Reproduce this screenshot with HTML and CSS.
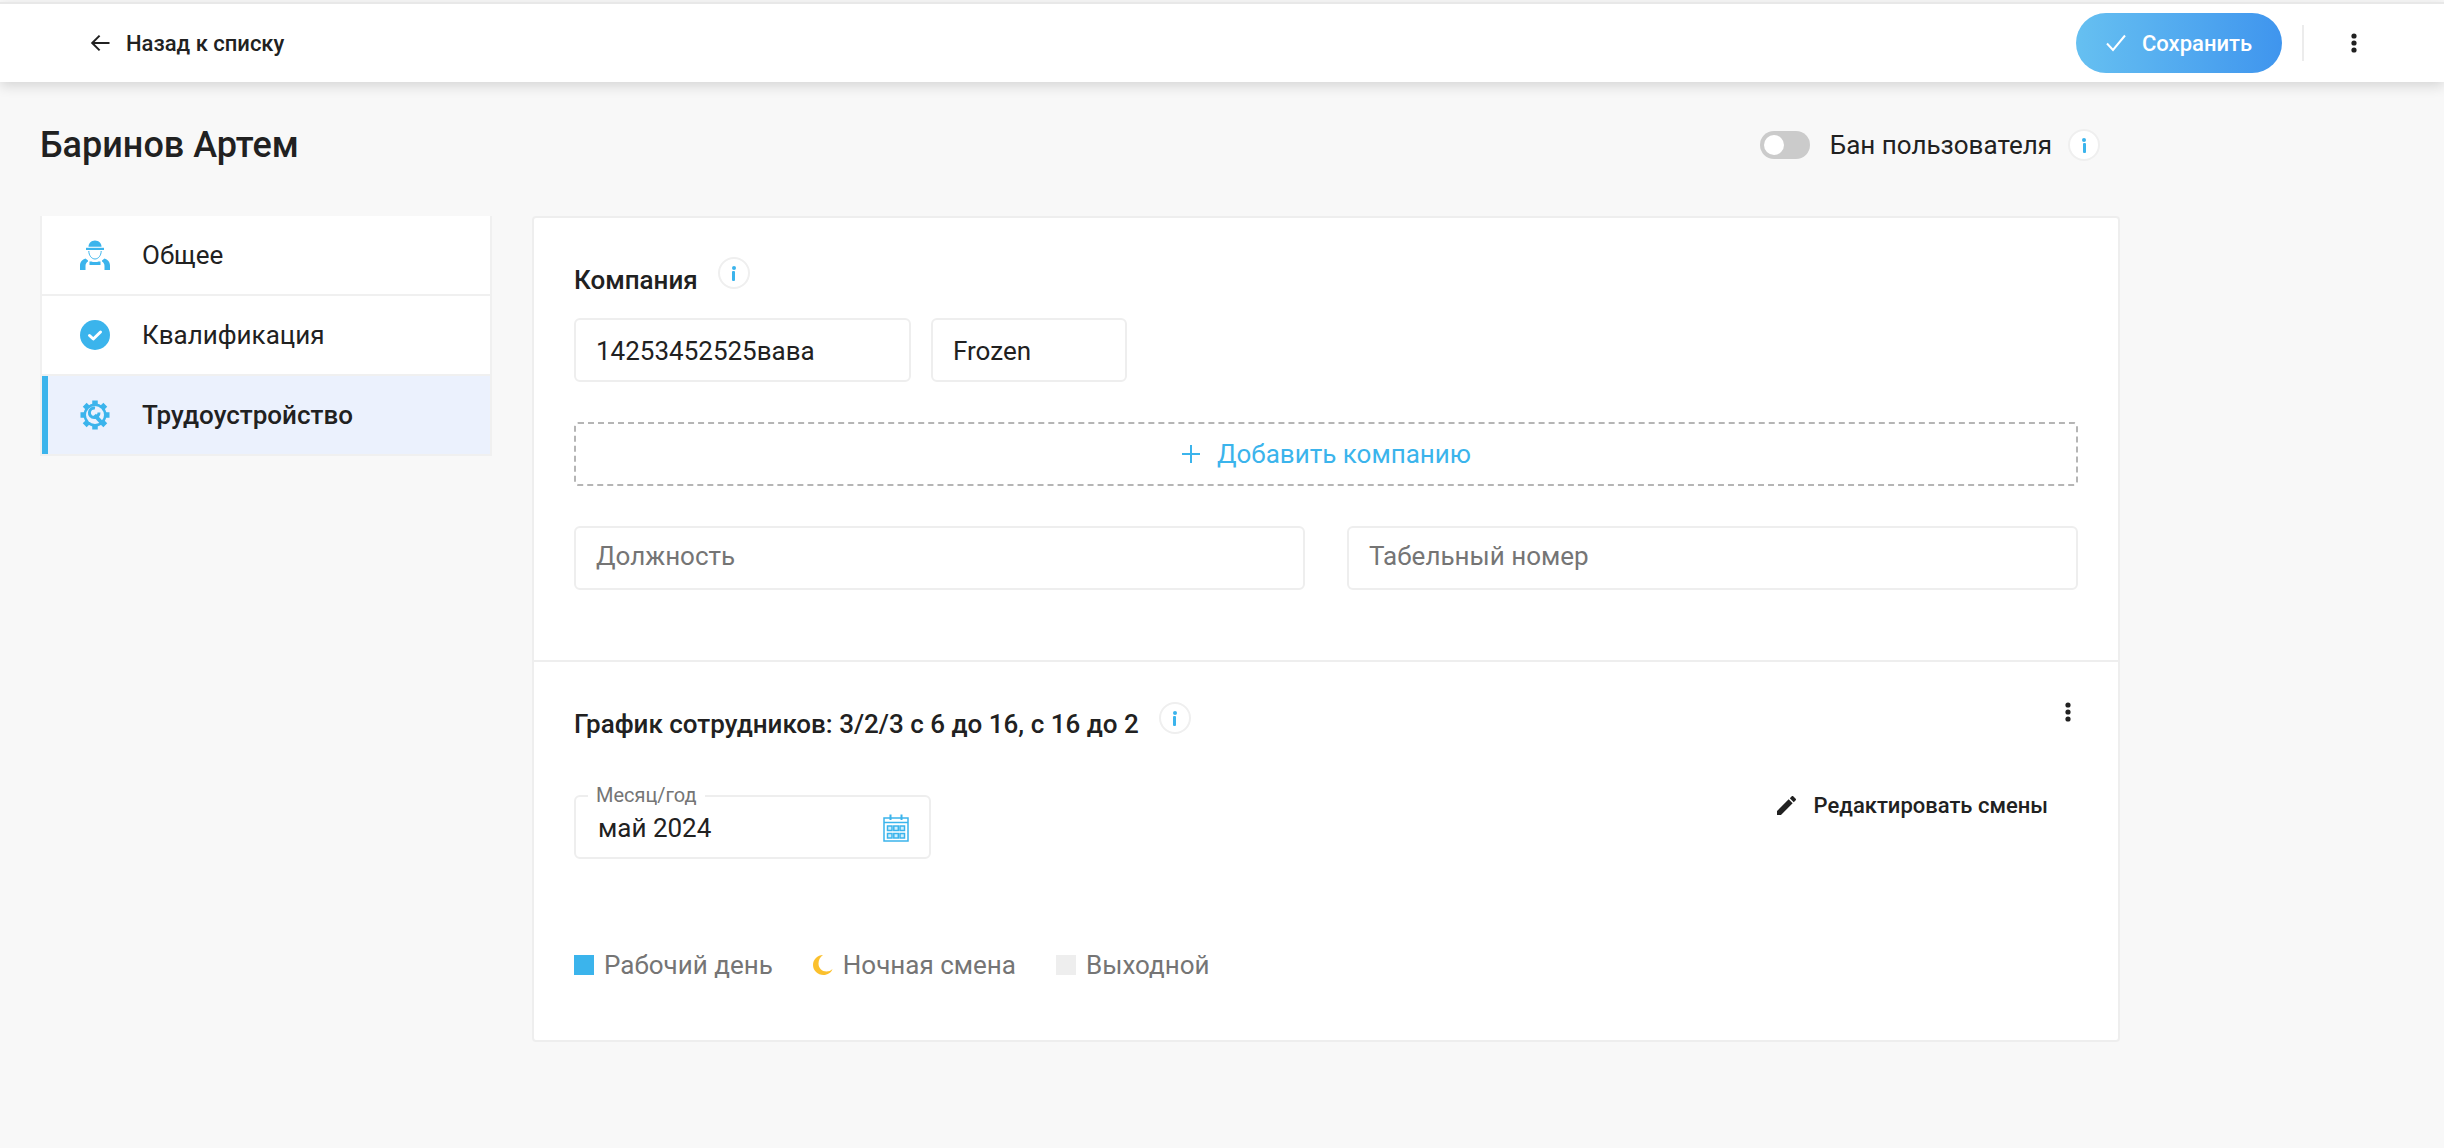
FILE: index.html
```html
<!DOCTYPE html>
<html lang="ru">

<head>
    <meta charset="UTF-8">
    <title>Баринов Артем</title>
    <link rel="stylesheet" href="styles.css">
</head>

<body>
    <header class="topbar">
        <a class="back-link" href="#">
            <svg class="back-icon" viewBox="0 0 20 20"><path d="M19.5 10H2.5M9.6 2.6 2.2 10l7.4 7.4" fill="none" stroke="#212121" stroke-width="2"/></svg>
            <span>Назад к списку</span>
        </a>
        <div class="topbar-actions">
            <button class="save-btn" type="button">
                <svg class="save-icon" viewBox="0 0 20 18"><path d="M1 9.5 7 16 19 1.5" fill="none" stroke="#fff" stroke-width="2"/></svg>
                <span>Сохранить</span>
            </button>
            <div class="topbar-divider"></div>
            <svg class="dots dots-top" viewBox="0 0 6 20"><circle cx="3" cy="3" r="2.6"/><circle cx="3" cy="10" r="2.6"/><circle cx="3" cy="17" r="2.6"/></svg>
        </div>
    </header>

    <main class="content">
        <div class="title-row">
            <h1>Баринов Артем</h1>
            <div class="ban">
                <span class="toggle"><span class="toggle-knob"></span></span>
                <span class="ban-label">Бан пользователя</span>
                <span class="info"><span class="info-dot"></span><span class="info-stem"></span></span>
            </div>
        </div>

        <div class="columns">
            <nav class="sidebar">
                <a class="side-item" href="#">
                    <svg class="side-icon" viewBox="0 0 30 30">
                        <path fill="#3bb4ec" d="M8.500 6.800C8.500 3.300 11.300 0.500 15 0.500s6.500 2.800 6.500 6.300Z"/>
                        <rect x="6" y="7.800" width="18" height="2.200" fill="#3bb4ec"/>
                        <path fill="none" stroke="#3bb4ec" stroke-width="1" d="M8.800 11c0 4.500 2.900 8 6.200 8s6.200-3.500 6.200-8"/>
                        <path fill="#3bb4ec" d="M0 30v-4.500c0-3.500 2.300-6 5.500-7l2.500 2v1c-1.700 1-2.500 2.500-2.500 4.500v4Z"/>
                        <path fill="#3bb4ec" d="M30 30v-4.500c0-3.500-2.300-6-5.500-7l-2.500 2v1c1.700 1 2.500 2.500 2.500 4.500v4Z"/>
                        <path fill="#3bb4ec" d="M9.500 21.500h2c1.200.8 5.800.8 7 0h2V25h-11Z"/>
                    </svg>
                    <span>Общее</span>
                </a>
                <a class="side-item" href="#">
                    <svg class="side-icon" viewBox="0 0 30 30">
                        <circle cx="15" cy="15" r="15" fill="#3bb4ec"/>
                        <path d="M9.500 15.500l3.800 3.500 7.200-7" fill="none" stroke="#fff" stroke-width="3" stroke-linecap="round" stroke-linejoin="round"/>
                    </svg>
                    <span>Квалификация</span>
                </a>
                <a class="side-item side-item-active" href="#">
                    <svg class="side-icon" viewBox="0 0 30 30">
                        <path stroke="#3bb4ec" stroke-width="5.500" d="M15 0.500V29.500M0.500 15H29.500M4.700 4.700 25.300 25.300M25.300 4.700 4.700 25.300"/>
                        <circle cx="15" cy="15" r="11.500" fill="#3bb4ec"/>
                        <circle cx="15" cy="15" r="9" fill="#ebf1fd"/>
                        <path d="M16.500 8.500A4.800 4.800 0 1 0 20.500 13" fill="none" stroke="#3bb4ec" stroke-width="3" transform="translate(-1.500 -.5)"/>
                        <path d="M14.500 15 22 23" stroke="#3bb4ec" stroke-width="4"/>
                    </svg>
                    <span>Трудоустройство</span>
                </a>
            </nav>

            <section class="card">
                <div class="card-block company-block">
                    <div class="block-title">
                        <h2>Компания</h2>
                        <span class="info"><span class="info-dot"></span><span class="info-stem"></span></span>
                    </div>
                    <div class="chips">
                        <div class="field chip chip-name">14253452525вава</div>
                        <div class="field chip chip-status">Frozen</div>
                    </div>
                    <button class="add-company" type="button">
                        <svg class="plus" viewBox="0 0 20 20"><path d="M10 1V19M1 10H19" stroke="#3bb4ec" stroke-width="2"/></svg>
                        <span>Добавить компанию</span>
                    </button>
                    <div class="field-row">
                        <div class="field placeholder">Должность</div>
                        <div class="field placeholder">Табельный номер</div>
                    </div>
                </div>

                <div class="card-block schedule-block">
                    <div class="schedule-head">
                        <div class="block-title">
                            <h2 class="schedule-title">График сотрудников: 3/2/3 с 6 до 16, с 16 до 2</h2>
                            <span class="info"><span class="info-dot"></span><span class="info-stem"></span></span>
                        </div>
                        <svg class="dots dots-card" viewBox="0 0 6 20"><circle cx="3" cy="3" r="2.600"/><circle cx="3" cy="10" r="2.600"/><circle cx="3" cy="17" r="2.600"/></svg>
                    </div>
                    <div class="schedule-controls">
                        <div class="field month-field">
                            <span class="month-label">Месяц/год</span>
                            <span class="month-value">май 2024</span>
                            <svg class="calendar" viewBox="0 0 26 28">
                                <path d="M1 4H25V27H1Z" fill="none" stroke="#3bb4ec" stroke-width="1.500"/>
                                <path d="M1 8.500H25" stroke="#3bb4ec" stroke-width="1.500"/>
                                <path d="M7.500 0.500V6M18.500 0.500V6" stroke="#3bb4ec" stroke-width="2"/>
                                <g fill="#cfeefc" stroke="#3bb4ec" stroke-width="1.500">
                                    <rect x="4.500" y="12" width="4.500" height="4.500"/><rect x="10.800" y="12" width="4.500" height="4.500"/><rect x="17" y="12" width="4.500" height="4.500"/>
                                    <rect x="4.500" y="19.500" width="4.500" height="4.500"/><rect x="10.800" y="19.500" width="4.500" height="4.500"/><rect x="17" y="19.500" width="4.500" height="4.500"/>
                                </g>
                            </svg>
                        </div>
                        <a class="edit-link" href="#">
                            <svg class="pencil" viewBox="3 3 18 18"><path fill="#212121" d="M3 17.250V21h3.750L17.810 9.940l-3.750-3.750L3 17.250zM20.710 7.040a1 1 0 0 0 0-1.410l-2.340-2.340a1 1 0 0 0-1.410 0l-1.830 1.830 3.750 3.750 1.830-1.830z"/></svg>
                            <span>Редактировать смены</span>
                        </a>
                    </div>
                    <div class="legend">
                        <div class="legend-item"><span class="swatch swatch-work"></span><span>Рабочий день</span></div>
                        <div class="legend-item">
                            <svg class="moon" viewBox="0 0 20 20"><path fill="#fbc02d" d="M10 0C7 2 5.500 5 5.500 8.500c0 4.500 3.500 8 8 8 2.300 0 4.500-.8 6-2.500C18.500 17.500 14.500 20 10.500 20 4.700 20 0 15.500 0 10 0 4.500 4.500 0 10 0Z"/></svg>
                            <span>Ночная смена</span>
                        </div>
                        <div class="legend-item"><span class="swatch swatch-off"></span><span>Выходной</span></div>
                    </div>
                </div>
            </section>
        </div>
    </main>
</body>

</html>
```

FILE: styles.css
```css
* {
    box-sizing: border-box;
}

body {
    margin: 0;
    min-height: 100vh;
    background-color: #f8f8f8;
    font-family: 'Roboto', 'Liberation Sans', sans-serif;
    color: #212121;
    overflow: hidden;
}

a {
    color: inherit;
    text-decoration: none;
}

h1,
h2 {
    margin: 0;
    font-weight: 500;
}

.topbar {
    height: 80px;
    margin-top: 2px;
    border-top: 2px solid #e8e8e8;
    padding: 9px 0 0 90px;
    background: white;
    box-shadow: 0 4px 12px rgba(0, 0, 0, 0.14);
    display: flex;
    justify-content: space-between;
    align-items: flex-start;
}

.back-link {
    display: flex;
    align-items: center;
    gap: 16px;
    height: 60px;
    font-size: 22px;
    font-weight: 500;
}

.back-icon {
    width: 20px;
    height: 20px;
}

.topbar-actions {
    display: flex;
    align-items: center;
    height: 60px;
    padding-right: 87px;
}

.save-btn {
    width: 206px;
    height: 60px;
    padding: 0 0 0 30px;
    border: none;
    border-radius: 30px;
    background: linear-gradient(90deg, #66c0f1, #3f95ee);
    color: white;
    font-family: inherit;
    font-size: 22px;
    font-weight: 500;
    display: flex;
    align-items: center;
    gap: 16px;
}

.save-icon {
    width: 20px;
    height: 18px;
}

.topbar-divider {
    width: 2px;
    height: 36px;
    margin-left: 20px;
    background: #ececec;
}

.dots {
    width: 6px;
    height: 20px;
    fill: #212121;
    flex-shrink: 0;
}

.dots-top {
    margin-left: 47px;
}

.content {
    padding: 0 0 0 40px;
}

.title-row {
    width: 2060px;
    height: 134px;
    padding-bottom: 8px;
    display: flex;
    justify-content: space-between;
    align-items: center;
}

h1 {
    font-size: 36px;
}

.ban {
    display: flex;
    align-items: center;
}

.toggle {
    width: 50px;
    height: 28px;
    padding: 4px;
    border-radius: 14px;
    background: #cbcbcb;
    margin-right: 20px;
}

.toggle-knob {
    display: block;
    width: 20px;
    height: 20px;
    border-radius: 50%;
    background: white;
}

.ban-label {
    font-size: 26px;
    margin-right: 16px;
}

.info {
    width: 32px;
    height: 32px;
    border: 2px solid #efefef;
    border-radius: 50%;
    background: white;
    display: inline-flex;
    flex-direction: column;
    align-items: center;
    justify-content: center;
    gap: 1px;
    flex-shrink: 0;
}

.info-dot {
    width: 4px;
    height: 4px;
    border-radius: 50%;
    background: #3bb4ec;
}

.info-stem {
    width: 3px;
    height: 10px;
    border-radius: 1px;
    background: #3bb4ec;
}

.columns {
    display: flex;
    align-items: flex-start;
    gap: 41px;
}

.sidebar {
    width: 452px;
    border: 2px solid #f0f0f0;
    border-top: none;
    display: flex;
    flex-direction: column;
    background: #f0f0f0;
    gap: 2px;
}

.side-item {
    height: 78px;
    padding-left: 38px;
    background: white;
    display: flex;
    align-items: center;
    gap: 32px;
    font-size: 26px;
}

.side-item-active {
    padding-left: 32px;
    border-left: 6px solid #3bb4ec;
    background: #ebf1fd;
    font-weight: 500;
}

.side-icon {
    width: 30px;
    height: 30px;
    flex-shrink: 0;
}

.card {
    width: 1588px;
    height: 826px;
    margin-left: -1px;
    border: 2px solid #eeeeee;
    border-radius: 4px;
    background: white;
}

.card-block {
    padding: 0 40px;
}

.company-block {
    height: 444px;
    padding-top: 39px;
    border-bottom: 2px solid #eeeeee;
}

.block-title {
    display: flex;
    align-items: flex-start;
}

h2 {
    font-size: 26px;
    line-height: 32px;
    margin-top: 7px;
}

.schedule-title {
    margin-top: 6px;
}

.block-title .info {
    margin-left: 20px;
}

.chips {
    display: flex;
    gap: 20px;
    margin-top: 22px;
}

.field {
    height: 64px;
    padding: 0 20px;
    border: 2px solid #eeeeee;
    border-radius: 6px;
    background: white;
    display: flex;
    align-items: center;
    font-size: 26px;
}

.chip {
    padding-top: 2px;
}

.chip-name {
    width: 337px;
}

.chip-status {
    width: 196px;
}

.add-company {
    width: 100%;
    height: 64px;
    margin-top: 40px;
    border: 2px dashed #b5b5b5;
    border-radius: 4px;
    background: white;
    color: #3bb4ec;
    font-family: inherit;
    font-size: 26px;
    display: flex;
    align-items: center;
    justify-content: center;
    gap: 16px;
}

.plus {
    width: 20px;
    height: 20px;
}

.field-row {
    display: grid;
    grid-template-columns: 1fr 1fr;
    gap: 42px;
    margin-top: 40px;
}

.placeholder {
    color: #757575;
    padding-bottom: 4px;
}

.schedule-block {
    padding-top: 40px;
}

.schedule-head {
    display: flex;
    justify-content: space-between;
    align-items: flex-start;
}

.dots-card {
    margin-right: 7px;
}

.schedule-controls {
    display: flex;
    justify-content: space-between;
    align-items: flex-start;
    margin-top: 55px;
}

.month-field {
    position: relative;
    width: 357px;
    padding-top: 2px;
    padding-left: 22px;
    justify-content: space-between;
    padding-right: 20px;
}

.month-label {
    position: absolute;
    left: 12px;
    top: -14px;
    padding: 0 8px;
    background: white;
    font-size: 20px;
    line-height: 24px;
    color: #757575;
}

.calendar {
    width: 26px;
    height: 28px;
}

.edit-link {
    display: flex;
    align-items: center;
    gap: 18px;
    height: 20px;
    margin-right: 30px;
    font-size: 22px;
    font-weight: 500;
}

.pencil {
    width: 19px;
    height: 19px;
}

.legend {
    display: flex;
    gap: 40px;
    margin-top: 91px;
    font-size: 26px;
    color: #757575;
}

.legend-item {
    display: flex;
    align-items: center;
    gap: 10px;
}

.swatch {
    width: 20px;
    height: 20px;
}

.swatch-work {
    background: #3bb4ec;
}

.swatch-off {
    background: #eeeeee;
}

.moon {
    width: 20px;
    height: 20px;
}
```
